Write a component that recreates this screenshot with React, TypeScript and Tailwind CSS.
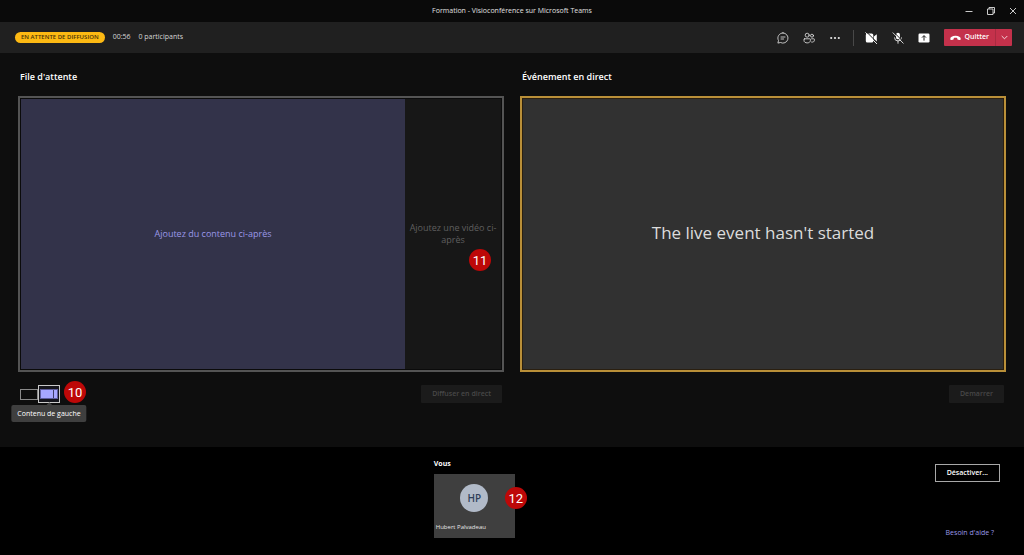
import type { ReactNode } from "react";
import clsx from "clsx";

function StepBadge({ value, className }: { value: number; className?: string }) {
  return (
    <span
      className={clsx(
        "flex size-[22px] items-center justify-center rounded-full bg-[#bd0808] font-['Roboto',sans-serif] text-[13px] leading-none text-white",
        className
      )}
    >
      {value}
    </span>
  );
}

function IconButton({ label, children }: { label: string; children: ReactNode }) {
  return (
    <button
      type="button"
      aria-label={label}
      className="flex size-4 items-center justify-center text-[#e8e8e8]"
    >
      {children}
    </button>
  );
}

function TitleBar() {
  return (
    <header className="grid h-[22px] grid-cols-[1fr_auto_1fr] items-center bg-[#0a0a0a] text-[#e0e0e0]">
      <span />
      <h1 className="text-[7px] font-medium">
        Formation - Visioconférence sur Microsoft Teams
      </h1>
      <div className="flex justify-end gap-1 pr-[2px]">
        <button type="button" aria-label="Réduire" className="flex size-[18px] items-center justify-center">
          <svg width="8" height="8" viewBox="0 0 8 8" stroke="currentColor" strokeWidth="0.9">
            <path d="M0.5 4.5H7.5" />
          </svg>
        </button>
        <button type="button" aria-label="Restaurer" className="flex size-[18px] items-center justify-center">
          <svg width="8" height="8" viewBox="0 0 8 8" fill="none" stroke="currentColor" strokeWidth="0.9">
            <path d="M0.5 2H6V7.5H0.5ZM2 2V0.5H7.5V6H6" />
          </svg>
        </button>
        <button type="button" aria-label="Fermer" className="flex size-[18px] items-center justify-center">
          <svg width="8" height="8" viewBox="0 0 8 8" stroke="currentColor" strokeWidth="0.9">
            <path d="M1 1L7 7M7 1L1 7" />
          </svg>
        </button>
      </div>
    </header>
  );
}

function Toolbar() {
  return (
    <div className="flex h-[31px] items-center bg-[#202020] pr-3 pl-[15px] text-[7px] text-[#d6d6d6]">
      <span className="flex h-[11px] items-center rounded-full bg-[#fdb913] px-[6px] text-[6px] font-semibold text-[#4a3208] uppercase">
        En attente de diffusion
      </span>
      <span className="ml-2">00:56</span>
      <span className="ml-2">0 participants</span>

      <div className="ml-auto flex items-center gap-[10px]">
        <IconButton label="Conversation">
          <svg width="12" height="12" viewBox="0 0 12 12" fill="none" stroke="currentColor" strokeWidth="0.8" strokeLinecap="round" strokeLinejoin="round">
            <path d="M6 0.9A5.1 5.1 0 1 1 3.5 10.5L0.9 11.1L1.5 8.5A5.1 5.1 0 0 1 6 0.9Z" />
            <path d="M4 5H8M4 7H6.6" />
          </svg>
        </IconButton>
        <IconButton label="Participants">
          <svg width="12" height="12" viewBox="0 0 12 12" fill="none" stroke="currentColor" strokeWidth="0.8" strokeLinecap="round" strokeLinejoin="round">
            <circle cx="4.2" cy="3.2" r="2" />
            <circle cx="9" cy="3.7" r="1.5" />
            <path d="M1.6 6.8H6.8Q7.4 6.8 7.4 7.4V8.4C7.4 10 6 10.9 4.2 10.9S1 10 1 8.4V7.4Q1 6.8 1.6 6.8Z" />
            <path d="M8.6 6.8H10.8Q11.4 6.8 11.4 7.4V8.2C11.4 9.7 10.2 10.3 8.6 10.1" />
          </svg>
        </IconButton>
        <IconButton label="Autres actions">
          <svg width="12" height="12" viewBox="0 0 12 12" fill="currentColor">
            <circle cx="2.2" cy="6" r="1.1" />
            <circle cx="6" cy="6" r="1.1" />
            <circle cx="9.8" cy="6" r="1.1" />
          </svg>
        </IconButton>
        <span className="h-4 w-px bg-[#484848]" />
        <IconButton label="Activer la caméra">
          <svg width="13" height="12" viewBox="0 0 13 12">
            <path d="M2.6 1.5H6.7A1.6 1.6 0 0 1 8.3 3.1V8.9A1.6 1.6 0 0 1 6.7 10.5H2.4A1.6 1.6 0 0 1 0.8 8.9V3.1A1.6 1.6 0 0 1 2.4 1.5ZM8.9 4.4L11.8 2.2V9.8L8.9 7.6Z" fill="#fff" />
            <path d="M1.8 0.2L12.6 11" stroke="#202020" strokeWidth="1" />
            <path d="M0.7 0.7L11.7 11.7" stroke="#fff" strokeWidth="0.9" strokeLinecap="round" />
          </svg>
        </IconButton>
        <IconButton label="Activer le micro">
          <svg width="12" height="12" viewBox="0 0 12 12" fill="none" stroke="#fff" strokeWidth="0.8" strokeLinecap="round">
            <rect x="4.1" y="0.7" width="3.8" height="6.6" rx="1.9" fill="#fff" stroke="none" />
            <path d="M2.5 5.8A3.5 3.2 0 0 0 9.5 5.8M6 9V11.3" />
            <path d="M2 0.4L12 10.4" stroke="#202020" strokeWidth="1" />
            <path d="M1 0.8L11.2 11.2" />
          </svg>
        </IconButton>
        <IconButton label="Partager du contenu">
          <svg width="12" height="12" viewBox="0 0 12 12">
            <rect x="0.5" y="1.6" width="11" height="8.8" rx="1.2" fill="#fff" />
            <path d="M6 8.6V3.8M4 5.6L6 3.6L8 5.6" fill="none" stroke="#202020" strokeWidth="1" />
          </svg>
        </IconButton>
        <div className="ml-[2px] flex h-[17px] rounded-[1px] bg-[#c4314b] text-white">
          <button type="button" className="flex items-center gap-1 px-[6px] text-[7px] font-semibold">
            <svg width="11" height="6" viewBox="0 0 11 6" fill="currentColor">
              <path d="M5.5 0.7C8.6 0.7 10.8 2 10.7 3.8C10.7 4.8 10.2 5.2 9.5 5L8.1 4.7C7.6 4.6 7.4 4.3 7.3 3.9L7.2 3.1C6.2 2.7 4.8 2.7 3.8 3.1L3.7 3.9C3.6 4.3 3.4 4.6 2.9 4.7L1.5 5C0.8 5.2 0.3 4.8 0.3 3.8C0.2 2 2.4 0.7 5.5 0.7Z" />
            </svg>
            Quitter
          </button>
          <button
            type="button"
            aria-label="Options de sortie"
            className="flex w-[17px] items-center justify-center border-l border-[#a92b41]"
          >
            <svg width="7" height="5" viewBox="0 0 7 5" fill="none" stroke="currentColor" strokeWidth="0.8">
              <path d="M0.7 1L3.5 3.8L6.3 1" />
            </svg>
          </button>
        </div>
      </div>
    </div>
  );
}

function QueuePanel() {
  return (
    <section className="flex-1">
      <h2 className="px-[2px] text-[9px] leading-3 font-semibold text-white">File d'attente</h2>
      <div className="mt-[13px] border-2 border-[#545454] bg-[#0b0b0b] p-px">
        <div className="flex aspect-video">
          <div className="flex w-4/5 items-center justify-center bg-[#33334a] text-[9px] text-[#9a98e8]">
            Ajoutez du contenu ci-après
          </div>
          <div className="relative flex w-1/5 items-center justify-center bg-[#171717] text-center text-[9px] leading-3 text-[#5f5f5f]">
            Ajoutez une vidéo ci-après
            <StepBadge value={11} className="absolute right-[10px] bottom-[98px]" />
          </div>
        </div>
      </div>

      <div className="mt-[13px] flex items-start justify-between px-[2px]">
        <div className="flex items-center">
          <button type="button" aria-label="Contenu seul" className="h-[11px] w-[18px] border border-[#8a8a8a]" />
          <div className="relative">
            <button
              type="button"
              aria-label="Contenu de gauche"
              aria-describedby="layout-tip"
              className="flex h-[18px] w-[22px] items-center justify-center border border-[#c8c8c8] bg-[#15151c]"
            >
              <span className="flex h-[10px] w-[18px] gap-px border border-[#5d5c9c] bg-[#3d3c66]">
                <span className="flex-1 bg-[#a6a7ff]" />
                <span className="w-[3px] bg-[#a6a7ff]" />
              </span>
            </button>
            <div
              id="layout-tip"
              role="tooltip"
              className="absolute top-5 left-1/2 -translate-x-1/2 rounded-[2px] bg-[#3f3f3f] px-[6px] py-1 text-[7px] leading-[9px] whitespace-nowrap text-white"
            >
              <span className="absolute -top-[2px] left-1/2 size-1 -translate-x-1/2 rotate-45 bg-[#3f3f3f]" />
              Contenu de gauche
            </div>
          </div>
          <StepBadge value={10} className="-mt-2 -mb-1 ml-1" />
        </div>
        <button
          type="button"
          disabled
          className="h-[18px] rounded-[1px] bg-[#1b1b1b] px-[11px] text-[7px] font-semibold text-[#484848]"
        >
          Diffuser en direct
        </button>
      </div>
    </section>
  );
}

function LivePanel() {
  return (
    <section className="flex-1">
      <h2 className="px-[2px] text-[9px] leading-3 font-semibold text-white">Événement en direct</h2>
      <div className="mt-[13px] border-2 border-[#b98f38] bg-[#2a1f10] p-px">
        <div className="flex aspect-video items-center justify-center bg-[#313131] pb-[3px] text-[17px] text-[#dcdcdc]">
          The live event hasn't started
        </div>
      </div>
      <div className="mt-[13px] flex justify-end px-[2px]">
        <button
          type="button"
          disabled
          className="h-[18px] rounded-[1px] bg-[#1b1b1b] px-[11px] text-[7px] font-semibold text-[#484848]"
        >
          Demarrer
        </button>
      </div>
    </section>
  );
}

function Footer() {
  return (
    <footer className="grid flex-1 grid-cols-[46fr_81px_54fr] bg-black pt-3 pb-[17px]">
      <span />
      <div>
        <h2 className="text-[7px] leading-[10px] font-bold text-white">Vous</h2>
        <div className="relative mt-[5px] flex h-16 flex-col items-center bg-[#3f3f3f] pt-[10px]">
          <div className="flex size-7 items-center justify-center rounded-full bg-[#b1bac8] text-[10px] font-semibold text-[#2f3f58]">
            HP
          </div>
          <p className="mt-auto w-full px-[2px] pb-[5px] text-[6px] leading-3 text-[#e6e6e6]">
            Hubert Palvadeau
          </p>
          <StepBadge value={12} className="absolute top-[13px] -right-3" />
        </div>
      </div>
      <div className="flex flex-col items-end pt-[5px] pr-6">
        <button
          type="button"
          className="h-[18px] border border-[#a8a8a8] px-[11px] text-[7px] font-semibold text-white"
        >
          Désactiver...
        </button>
        <a href="#aide" className="mt-auto mr-[6px] text-[7px] leading-[10px] text-[#9a98e8]">
          Besoin d'aide ?
        </a>
      </div>
    </footer>
  );
}

export default function App() {
  return (
    <div className="flex min-h-screen flex-col bg-[#0e0e0e] font-['Open_Sans','Noto_Sans',sans-serif]">
      <TitleBar />
      <Toolbar />
      <main className="flex gap-4 px-[18px] pt-[18px] pb-11">
        <QueuePanel />
        <LivePanel />
      </main>
      <Footer />
    </div>
  );
}
